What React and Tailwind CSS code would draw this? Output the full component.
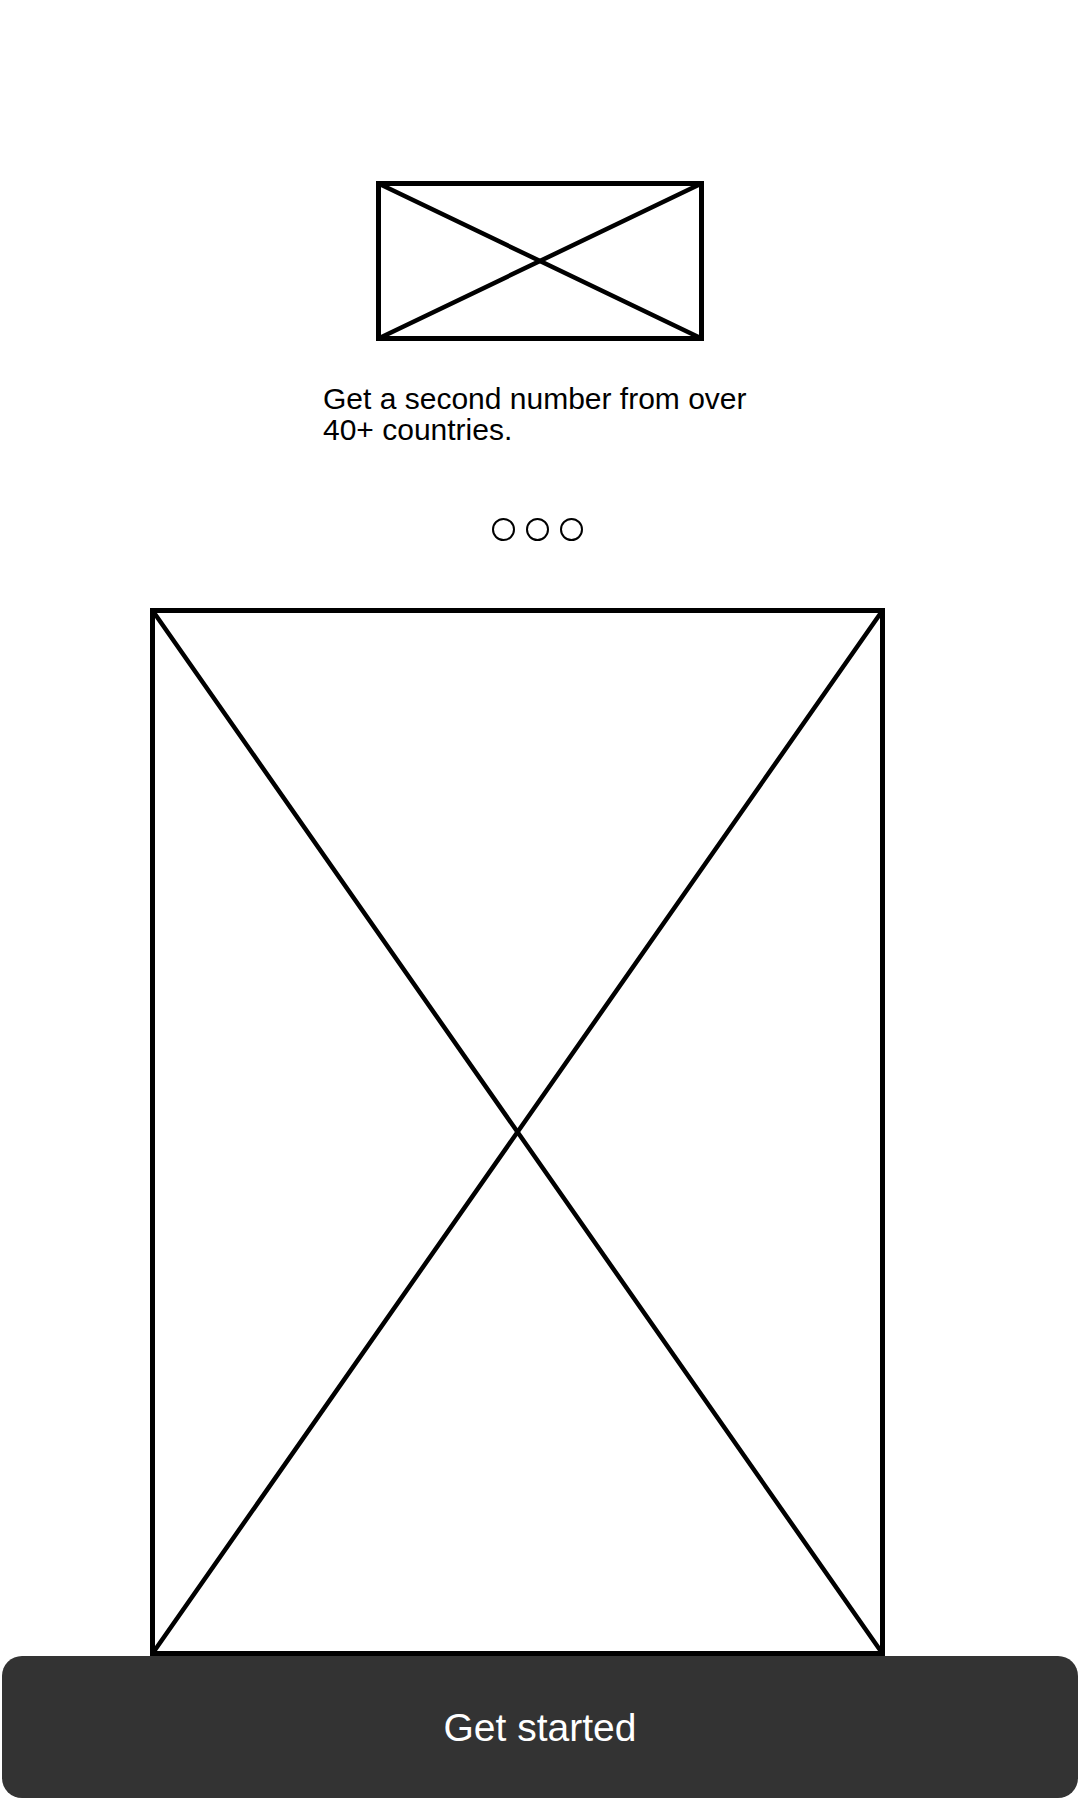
import React from "react";

// Wireframe placeholder: box with a cross through it
const Placeholder = ({ width, height }) => (
  <svg width={width} height={height} viewBox={`0 0 ${width} ${height}`} className="block">
    <rect x="2.5" y="2.5" width={width - 5} height={height - 5} fill="none" stroke="#000" strokeWidth="5" />
    <line x1="2.5" y1="2.5" x2={width - 2.5} y2={height - 2.5} stroke="#000" strokeWidth="4.5" strokeLinecap="round" />
    <line x1={width - 2.5} y1="2.5" x2="2.5" y2={height - 2.5} stroke="#000" strokeWidth="4.5" strokeLinecap="round" />
  </svg>
);

const App = () => {
  return (
    <div className="w-[1080px] h-[1800px] bg-white flex flex-col font-['Liberation_Sans',Arial,sans-serif] overflow-hidden">
      {/* Logo */}
      <div className="pt-[181px] ml-[376px]">
        <Placeholder width={328} height={160} />
      </div>

      {/* Slide text */}
      <p className="mt-[42px] ml-[323px] w-[434px] text-[30px] leading-[31px] text-black">
        Get a second number from over 40+ countries.
      </p>

      {/* Pager dots */}
      <div className="mt-[73px] ml-[492px] flex gap-[11px]">
        <span className="w-[23px] h-[23px] rounded-full border-[2.5px] border-black" />
        <span className="w-[23px] h-[23px] rounded-full border-[2.5px] border-black" />
        <span className="w-[23px] h-[23px] rounded-full border-[2.5px] border-black" />
      </div>

      {/* Illustration */}
      <div className="mt-[67px] ml-[150px]">
        <Placeholder width={735} height={1048} />
      </div>

      <button className="mt-[0px] mx-[2px] h-[142px] rounded-[20px] bg-[#333333] text-white text-[39px] leading-none">
        Get started
      </button>
    </div>
  );
};

export default App;
